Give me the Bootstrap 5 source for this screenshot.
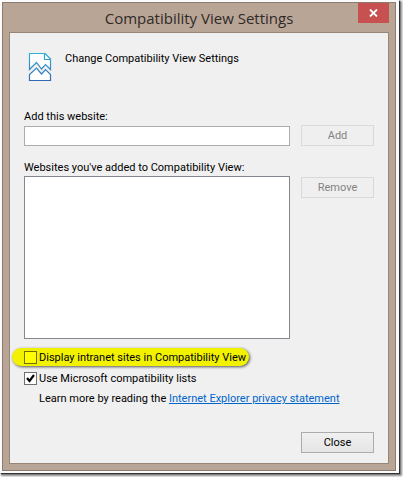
<!DOCTYPE html>
<html lang="en">
<head>
<meta charset="utf-8">
<meta name="viewport" content="width=device-width, initial-scale=1">
<title>Compatibility View Settings</title>
<link href="https://cdn.jsdelivr.net/npm/bootstrap@5.3.0/dist/css/bootstrap.min.css" rel="stylesheet">
<style>
body { font: 11px/18px Roboto, sans-serif; color: #000; background: #fff; }
.sheet { padding: 0 4px 4px 0; overflow: hidden; }
.sheet-inner { background: #fbfbfb; padding: 2px 3px 2px 2px; box-shadow: 1px 1px 1px #333, 2px 2px 2px 1px #888; min-height: calc(100vh - 5px); }
.window { background: #b9a596; border: 1px solid #8c7c70; padding: 0 6px 6px; }
.title-bar { height: 29px; font: 15px/30px "Open Sans", sans-serif; color: #2e2a27; }
.win-close { top: 0; right: 6px; width: 31px; height: 20px; background: #c75050; }
.client { background: #f0f0f0; border: 1px solid #978578; padding: 16px 14px 10px; }
.heading { margin: 0; font-size: 11px; line-height: 20px; }
.intro { gap: 11px; min-height: 59px; }
.form-row { display: grid; grid-template-columns: 1fr 73px; column-gap: 11px; }
.caption { height: 17px; }
.add-row { margin-bottom: 13px; }
.field { height: 20px; border: 1px solid #abadb3; font-size: 11px; }
.site-list { height: 163px; border: 1px solid #828790; border-radius: 0; background: #fff; }
.dlg-btn { height: 21px; padding: 0; border: 1px solid #acacac; border-radius: 0; background: linear-gradient(#f0f0f0, #e5e5e5); color: #000; font-size: 11px; line-height: 20px; }
.dlg-btn:disabled { border-color: #d9d9d9; background: #efefef; color: #838383; opacity: 1; }
.list-row .dlg-btn { margin-top: 1px; }
.options { margin-top: 9px; gap: 3px; }
.option { gap: 2px; height: 18px; line-height: 19px; }
.tick { appearance: none; width: 13px; height: 13px; margin: 0; border: 1px solid #707070; background: #fff; flex: none; }
.tick:checked { background: #fff url("data:image/svg+xml,%3Csvg xmlns='http://www.w3.org/2000/svg' viewBox='0 0 11 11'%3E%3Cpath d='M2 5l2.5 3L9 2' fill='none' stroke='%23000' stroke-width='2.1'/%3E%3C/svg%3E"); }
.marked { margin-left: -12px; padding: 0 3px 0 12px; border-radius: 9px; background: #f2f200; box-shadow: 1px 1px 3px #555; }
.marked .tick { background: #ff0; border-color: #707000; }
.learn { padding-left: 15px; }
.learn a { color: #0066cc; }
</style>
<script src="https://cdn.jsdelivr.net/npm/bootstrap@5.3.0/dist/js/bootstrap.bundle.min.js" defer></script>
</head>
<body>
<div class="sheet">
<div class="sheet-inner">
<main class="window position-relative">
  <header class="title-bar text-center">Compatibility View Settings
    <button class="win-close position-absolute border-0 p-0 d-flex align-items-center justify-content-center" type="button" aria-label="Close window">
      <svg width="9" height="8" viewBox="0 0 9 8"><path d="M1 .5L8 7.5M8 .5L1 7.5" stroke="#fff" stroke-width="1.8"/></svg>
    </button>
  </header>
  <div class="client">
    <div class="intro d-flex">
      <svg class="mt-1" width="30" height="30" viewBox="0 0 30 30" fill="none" aria-hidden="true">
        <defs><linearGradient id="ink" gradientUnits="userSpaceOnUse" x1="0" y1="0" x2="0" y2="28"><stop stop-color="#30b0d8"/><stop offset="1" stop-color="#3668b5"/></linearGradient></defs>
        <path d="M5.500 16.500V.5h15.500l5.500 5.500v10.500l-5-5-4 4.500-5-6.500z" fill="#fff"/>
        <path d="M5.500 16.500V.5h15.500l5.500 5.500v10.500l-5-5-4 4.500-5-6.500zM20.500 .5v6h6" stroke="url(#ink)" stroke-width="1.200"/>
        <path d="M5.500 27.500v-6l7-6.500 5 6 4-4.500 5 5v6z" fill="#fff" stroke="url(#ink)" stroke-width="1.200"/>
      </svg>
      <h1 class="heading fw-normal">Change Compatibility View Settings</h1>
    </div>
    <label class="caption d-block" for="site">Add this website:</label>
    <div class="form-row add-row align-items-end">
      <input class="field form-control rounded-0 px-1 py-0" id="site" type="text">
      <button class="dlg-btn btn" type="button" disabled>Add</button>
    </div>
    <div class="caption" id="sites-label">Websites you've added to Compatibility View:</div>
    <div class="form-row list-row align-items-start">
      <select class="site-list w-100" size="8" aria-labelledby="sites-label"></select>
      <button class="dlg-btn btn" type="button" disabled>Remove</button>
    </div>
    <div class="options d-flex flex-column align-items-start">
      <label class="option marked d-flex align-items-center"><input class="tick" type="checkbox">Display intranet sites in Compatibility View</label>
      <label class="option d-flex align-items-center"><input class="tick" type="checkbox" checked>Use Microsoft compatibility lists</label>
      <div class="learn">Learn more by reading the <a href="#">Internet Explorer privacy statement</a></div>
    </div>
    <div class="form-row mt-4"><span></span><button class="dlg-btn btn" type="button">Close</button></div>
  </div>
</main>
</div>
</div>
</body>
</html>
